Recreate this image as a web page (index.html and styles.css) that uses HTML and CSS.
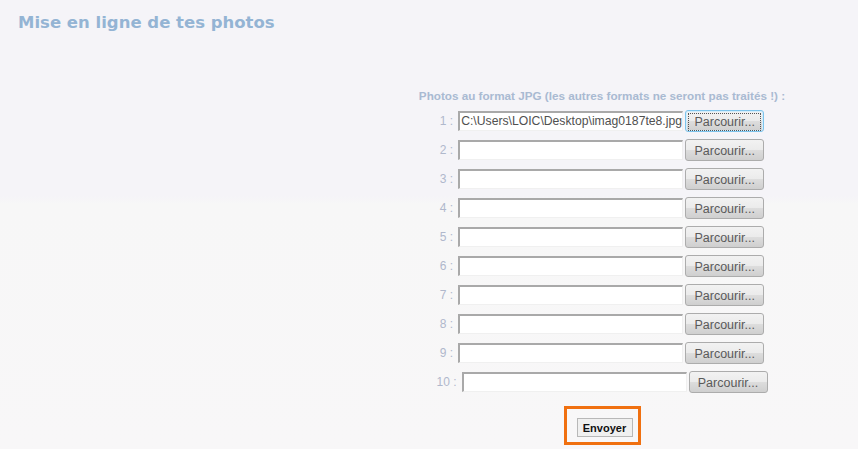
FILE: index.html
```html
<!DOCTYPE html>
<html lang="fr">
<head>
<meta charset="UTF-8">
<title>Mise en ligne de tes photos</title>
<link rel="stylesheet" href="styles.css">
</head>
<body>
<h1 class="page-title">Mise en ligne de tes photos</h1>
<form class="upload-form">
    <p class="upload-hint">Photos au format JPG (les autres formats ne seront pas traités !) :</p>
    <div class="file-row">
        <label class="file-num">1 :</label>
        <span class="file-path">C:\Users\LOIC\Desktop\imag0187te8.jpg</span>
        <button type="button" class="browse-btn focused"><span>Parcourir...</span></button>
    </div>
    <div class="file-row">
        <label class="file-num">2 :</label>
        <span class="file-path"></span>
        <button type="button" class="browse-btn"><span>Parcourir...</span></button>
    </div>
    <div class="file-row">
        <label class="file-num">3 :</label>
        <span class="file-path"></span>
        <button type="button" class="browse-btn"><span>Parcourir...</span></button>
    </div>
    <div class="file-row">
        <label class="file-num">4 :</label>
        <span class="file-path"></span>
        <button type="button" class="browse-btn"><span>Parcourir...</span></button>
    </div>
    <div class="file-row">
        <label class="file-num">5 :</label>
        <span class="file-path"></span>
        <button type="button" class="browse-btn"><span>Parcourir...</span></button>
    </div>
    <div class="file-row">
        <label class="file-num">6 :</label>
        <span class="file-path"></span>
        <button type="button" class="browse-btn"><span>Parcourir...</span></button>
    </div>
    <div class="file-row">
        <label class="file-num">7 :</label>
        <span class="file-path"></span>
        <button type="button" class="browse-btn"><span>Parcourir...</span></button>
    </div>
    <div class="file-row">
        <label class="file-num">8 :</label>
        <span class="file-path"></span>
        <button type="button" class="browse-btn"><span>Parcourir...</span></button>
    </div>
    <div class="file-row">
        <label class="file-num">9 :</label>
        <span class="file-path"></span>
        <button type="button" class="browse-btn"><span>Parcourir...</span></button>
    </div>
    <div class="file-row">
        <label class="file-num">10 :</label>
        <span class="file-path"></span>
        <button type="button" class="browse-btn"><span>Parcourir...</span></button>
    </div>
    <div class="submit-wrap">
        <span class="submit-frame">
            <button type="submit" class="submit-btn">Envoyer</button>
        </span>
    </div>
</form>
</body>
</html>
```

FILE: styles.css
```css
html {
    background: linear-gradient(#f5f4f8 0, #f5f4f8 196px, #f7f7f7 204px, #f8f7f8 100%);
    min-height: 100%;
}
body {
    margin: 0;
    font-family: "Liberation Sans", Arial, sans-serif;
}
.page-title {
    margin: 0;
    padding: 13px 0 0 18px;
    font-family: "DejaVu Sans", Verdana, sans-serif;
    font-size: 16.5px;
    font-weight: bold;
    color: #94b4d4;
    height: 89px;
    box-sizing: border-box;
}
.upload-form {
    margin-left: 346px;
    width: 512px;
}
.upload-hint {
    margin: 0 0 4px;
    text-align: center;
    font-size: 11.7px;
    font-weight: bold;
    color: #a9bad2;
}
.file-row {
    display: flex;
    justify-content: center;
    align-items: center;
    height: 29px;
}
.file-num {
    font-size: 12px;
    color: #b0b8cc;
    margin-right: 5px;
}
.file-path {
    width: 225px;
    height: 20px;
    box-sizing: border-box;
    background: #fff;
    border-style: solid;
    border-width: 2px 1px 1px 2px;
    border-color: #a9a9a9 #f0f0f0 #f0f0f0 #a9a9a9;
    padding-left: 1px;
    font-size: 12.2px;
    line-height: 17px;
    color: #505050;
    white-space: nowrap;
    overflow: hidden;
}
.browse-btn {
    margin-left: 2px;
    width: 79px;
    height: 22px;
    padding: 2px;
    border: 1px solid #acacac;
    border-radius: 3px;
    background: linear-gradient(#f2f2f2, #ebebeb 50%, #dddddd 51%, #cfcfcf);
    font-family: "Liberation Sans", Arial, sans-serif;
    font-size: 12.5px;
    color: #5a5a5a;
}
.browse-btn span {
    display: block;
    height: 16px;
    line-height: 16px;
    border: 1px dotted transparent;
}
.browse-btn.focused {
    border-color: #7ec4ec;
    box-shadow: inset 0 0 0 1px #d4eefc;
}
.browse-btn.focused span {
    border-color: #555;
}
.submit-wrap {
    display: flex;
    justify-content: center;
    padding-top: 10px;
}
.submit-frame {
    display: block;
    border: 3px solid #f07010;
    padding: 9px 5px 5px 10px;
}
.submit-btn {
    display: block;
    border: 1px solid #b8b8b8;
    background: #f0f0f0;
    width: 56px;
    height: 19px;
    padding: 0;
    font-family: "Liberation Sans", Arial, sans-serif;
    font-size: 11px;
    font-weight: bold;
    color: #111;
}
```
